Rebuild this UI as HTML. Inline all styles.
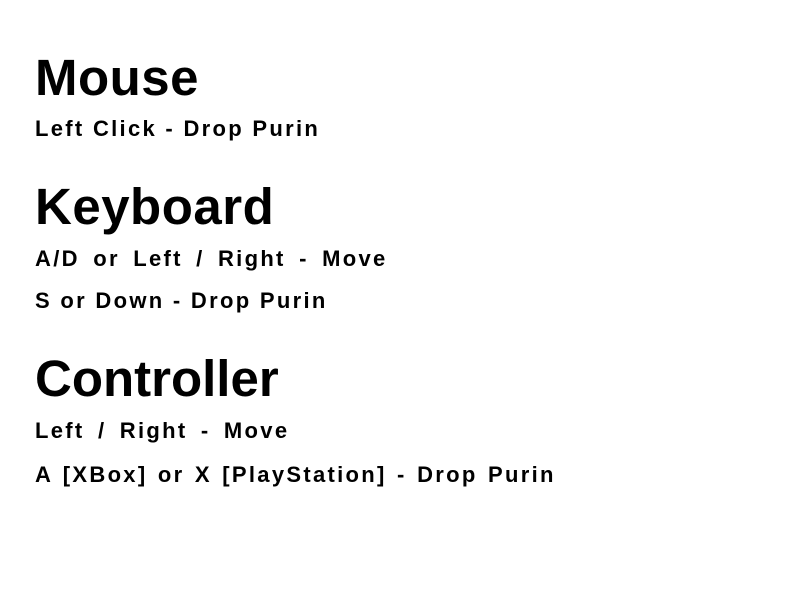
<!DOCTYPE html>
<html><head><meta charset="utf-8"><style>
body{margin:0;width:800px;height:600px;background:#fff;position:relative;overflow:hidden;font-family:"Liberation Sans",sans-serif;font-weight:bold;color:#000}
div{position:absolute;left:35px;line-height:1;white-space:nowrap}
.h{font-size:51px;letter-spacing:0.5px}
.t{font-size:22px;letter-spacing:2.3px}
</style></head><body>
<div class="h" style="top:52px">Mouse</div>
<div class="t" style="top:118px">Left Click - Drop Purin</div>
<div class="h" style="top:181px">Keyboard</div>
<div class="t" style="top:248px;word-spacing:5px">A/D or Left / Right - Move</div>
<div class="t" style="top:290px">S or Down - Drop Purin</div>
<div class="h" style="top:353px;letter-spacing:0">Controller</div>
<div class="t" style="top:420px;word-spacing:5px">Left / Right - Move</div>
<div class="t" style="top:464px;word-spacing:2px">A [XBox] or X [PlayStation] - Drop Purin</div>
</body></html>
